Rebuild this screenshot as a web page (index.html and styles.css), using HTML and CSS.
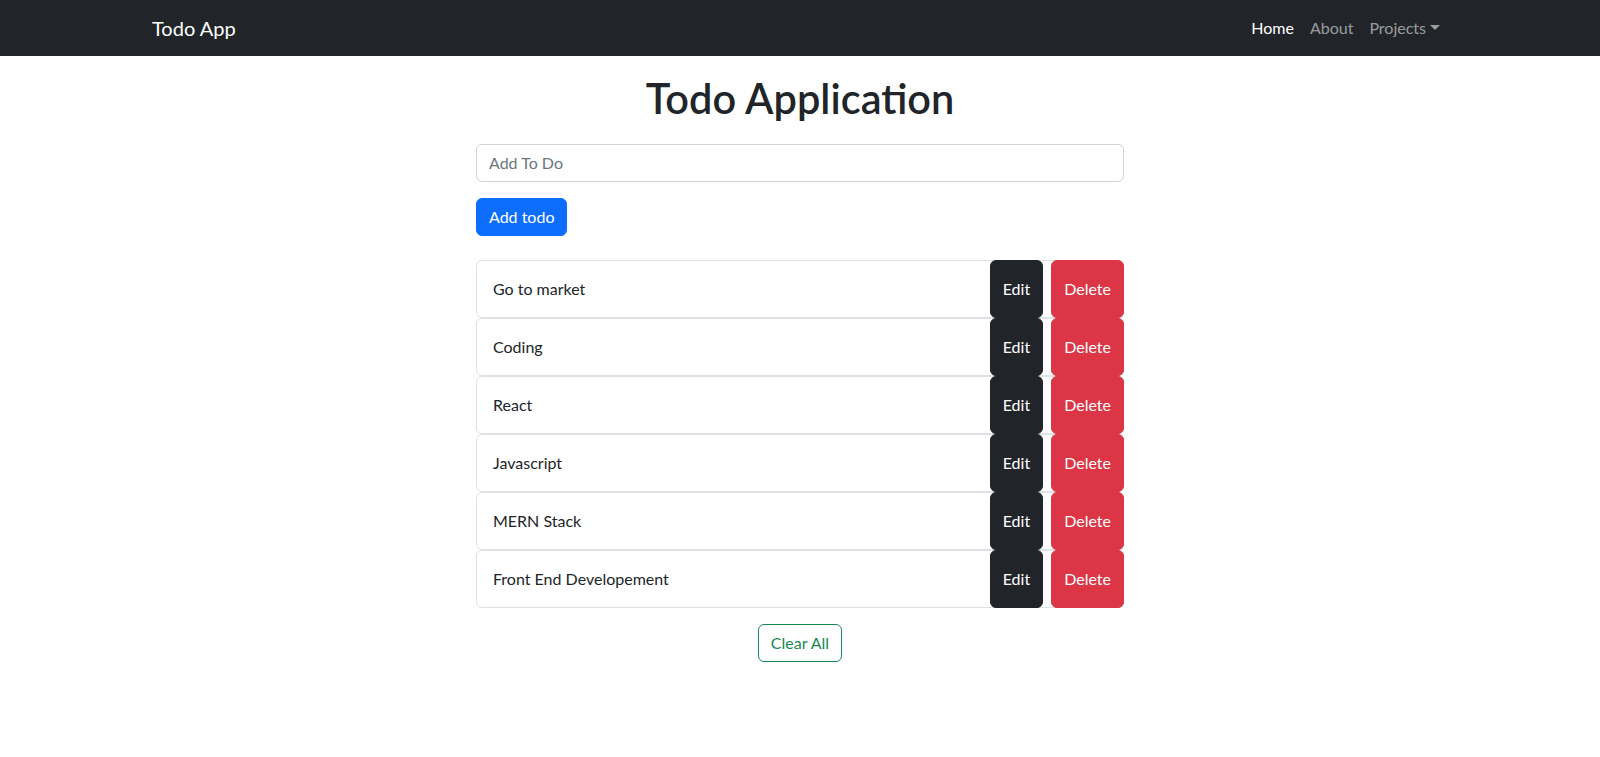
FILE: index.html
```html
<!DOCTYPE html>
<html lang="en">
<head>
<meta charset="utf-8">
<title>Todo App</title>
<link rel="stylesheet" href="styles.css">
</head>
<body>
<nav class="navbar">
  <div class="container nav-inner">
    <a class="brand" href="#">Todo App</a>
    <ul class="nav-links">
      <li><a class="nav-link active" href="#">Home</a></li>
      <li><a class="nav-link" href="#">About</a></li>
      <li><a class="nav-link dropdown" href="#">Projects<span class="caret"></span></a></li>
    </ul>
  </div>
</nav>
<main class="container">
  <h1 class="title">Todo Application</h1>
  <div class="content">
    <input class="todo-input" type="text" placeholder="Add To Do">
    <button class="btn btn-primary">Add todo</button>
    <ul class="todo-list">
      <li class="todo-item"><span class="todo-text">Go to market</span><button class="btn btn-dark">Edit</button><button class="btn btn-danger">Delete</button></li>
      <li class="todo-item"><span class="todo-text">Coding</span><button class="btn btn-dark">Edit</button><button class="btn btn-danger">Delete</button></li>
      <li class="todo-item"><span class="todo-text">React</span><button class="btn btn-dark">Edit</button><button class="btn btn-danger">Delete</button></li>
      <li class="todo-item"><span class="todo-text">Javascript</span><button class="btn btn-dark">Edit</button><button class="btn btn-danger">Delete</button></li>
      <li class="todo-item"><span class="todo-text">MERN Stack</span><button class="btn btn-dark">Edit</button><button class="btn btn-danger">Delete</button></li>
      <li class="todo-item"><span class="todo-text">Front End Developement</span><button class="btn btn-dark">Edit</button><button class="btn btn-danger">Delete</button></li>
    </ul>
    <div class="clear-row"><button class="btn btn-outline-success">Clear All</button></div>
  </div>
</main>
</body>
</html>
```
FILE: styles.css
```css
* { box-sizing: border-box; }
html, body { margin: 0; }
body {
  font-family: "Segoe UI", Lato, "Liberation Sans", sans-serif;
  font-size: 16px;
  line-height: 1.5;
  color: #212529;
  background: #fff;
}
.container {
  width: 1320px;
  margin: 0 auto;
  padding: 0 12px;
}
.navbar {
  background: #212529;
  height: 56px;
}
.nav-inner {
  display: flex;
  align-items: center;
  justify-content: space-between;
  height: 56px;
}
.brand {
  color: #fff;
  font-size: 20px;
  text-decoration: none;
  line-height: 30px;
}
.nav-links {
  display: flex;
  list-style: none;
  margin: 0;
  padding: 0;
}
.nav-link {
  display: block;
  padding: 8px;
  color: rgba(255,255,255,.55);
  text-decoration: none;
}
.nav-link.active { color: #fff; }
.caret {
  display: inline-block;
  margin-left: 4px;
  vertical-align: 4px;
  border-top: 5px solid;
  border-left: 5px solid transparent;
  border-right: 5px solid transparent;
}
.title {
  margin: 18px 0 20px;
  text-align: center;
  font-size: 41.5px;
  font-weight: 600;
  line-height: 1.2;
}
.content {
  width: 648px;
  margin: 0 auto;
}
.todo-input {
  display: block;
  width: 100%;
  height: 38px;
  padding: 6px 12px;
  font: inherit;
  color: #212529;
  border: 1px solid #ced4da;
  border-radius: 6px;
  margin-bottom: 16px;
}
.todo-input::placeholder { color: #6c757d; }
.btn {
  font: inherit;
  border: 1px solid transparent;
  border-radius: 6px;
  padding: 6px 12px;
  line-height: 24px;
  cursor: pointer;
}
.btn-primary { background: #0d6efd; border-color: #0d6efd; color: #fff; }
.btn-dark { background: #212529; border-color: #212529; color: #fff; }
.btn-danger { background: #dc3545; border-color: #dc3545; color: #fff; }
.btn-outline-success { background: #fff; border-color: #198754; color: #198754; }
.todo-list {
  list-style: none;
  margin: 24px 0 16px;
  padding: 0;
}
.todo-item {
  display: flex;
  align-items: stretch;
  height: 58px;
  border: 1px solid #dee2e6;
  border-radius: 6px;
}
.todo-text {
  flex: 1;
  display: flex;
  align-items: center;
  padding-left: 16px;
}
.todo-item .btn {
  margin: -1px 0;
}
.todo-item .btn-danger {
  margin: -1px -1px -1px 8px;
}
.clear-row {
  display: flex;
  justify-content: center;
}
```
